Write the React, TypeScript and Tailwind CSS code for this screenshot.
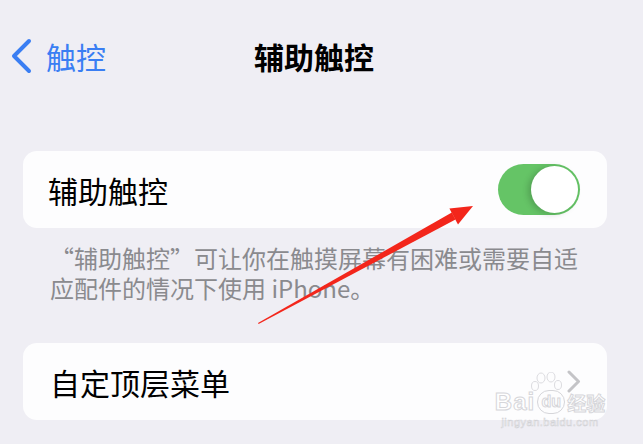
import React from "react";

function Toggle({ on }: { on: boolean }) {
  return (
    <div
      className={`w-[82px] h-[51px] rounded-full p-[2px] flex ${
        on ? "bg-[#65c466] justify-end" : "bg-[#e9e9eb] justify-start"
      }`}
    >
      <div className="w-[47px] h-[47px] rounded-full bg-white shadow-[-3px_1px_6px_rgba(0,0,0,0.18)]" />
    </div>
  );
}

function Chevron({ className }: { className?: string }) {
  return (
    <svg width="14" height="23" viewBox="0 0 14 23" className={className}>
      <path d="M2 2 L11.5 11.5 L2 21" fill="none" stroke="currentColor" strokeWidth="3" strokeLinecap="round" strokeLinejoin="round" />
    </svg>
  );
}

function RedArrow() {
  // annotation drawn on top of the screenshot
  return (
    <svg width="643" height="444" className="absolute inset-0 pointer-events-none">
      <polygon points="258,323 258.6,324 455.5,219.5 451.8,212.6" fill="#f3261b" />
      <polygon points="473,206 458,224.4 449.4,208.6" fill="#f3261b" />
    </svg>
  );
}

function Watermark() {
  return (
    <div className="absolute left-[490px] top-[372px] w-[120px] pointer-events-none flex flex-col items-center">
      <svg width="40" height="24" viewBox="0 0 40 24" className="ml-[-6px] mb-[-6px]">
        <g fill="none" stroke="#dcdce0" strokeWidth="1">
          <ellipse cx="14" cy="6" rx="4" ry="5" />
          <ellipse cx="24" cy="5" rx="4" ry="5" />
          <ellipse cx="8" cy="14" rx="3.5" ry="4.5" />
          <ellipse cx="31" cy="13" rx="3.5" ry="4.5" />
        </g>
      </svg>
      <div className="flex items-end leading-none font-['Liberation_Sans','Noto_Sans_CJK_SC',sans-serif] text-white [-webkit-text-stroke:1px_#d6d6da]">
        <span className="text-[24px] font-bold tracking-[1px]">Bai</span>
        <span className="mx-[2px] w-[28px] h-[24px] rounded-full border border-[#d6d6da] text-[16px] font-bold flex items-center justify-center">du</span>
        <span className="text-[19px] font-bold">经验</span>
      </div>
      <div className="mt-[3px] text-[11px] leading-none tracking-[0.5px] font-['Liberation_Sans',sans-serif] text-white [-webkit-text-stroke:0.6px_#d2d2d6]">
        jingyan.baidu.com
      </div>
    </div>
  );
}

export default function App() {
  return (
    <div className="relative w-[643px] h-[444px] overflow-hidden bg-[#efeef4] font-['Noto_Sans_CJK_SC',sans-serif]">
      {/* Nav bar */}
      <div className="mt-[28px] h-[56px] grid grid-cols-[1fr_auto_1fr] items-center pr-[15px]">
        <div className="flex items-center text-[#3a7ef3]">
          <svg width="24" height="36" viewBox="0 0 24 36" className="ml-[9px]">
            <path d="M20 3 L5 18 L20 33" fill="none" stroke="currentColor" strokeWidth="4" strokeLinecap="round" strokeLinejoin="round" />
          </svg>
          <span className="ml-[13px] text-[30px] leading-none">触控</span>
        </div>
        <div className="text-[30px] font-bold leading-none text-black">辅助触控</div>
        <div />
      </div>

      <div className="pl-[23px] w-[607px]">
        {/* Toggle row */}
        <div className="mt-[67px] h-[77px] rounded-[14px] bg-[#fdfdfe] flex items-center justify-between pl-[25px] pr-[27px]">
          <span className="text-[30px] leading-none text-black">辅助触控</span>
          <Toggle on />
        </div>

        <p className="mt-[15px] pl-[27px] text-[24px] leading-[30px] text-[#8a8a8e]">
          “辅助触控”可让你在触摸屏幕有困难或需要自适
          <br />
          应配件的情况下使用 iPhone。
        </p>

        {/* Custom top level menu */}
        <div className="mt-[40px] h-[77px] rounded-[14px] bg-[#fdfdfe] flex items-center justify-between pl-[27px] pr-[26px]">
          <span className="text-[30px] leading-none text-black">自定顶层菜单</span>
          <Chevron className="text-[#c4c4c7]" />
        </div>
      </div>

      <RedArrow />
      <Watermark />
    </div>
  );
}
